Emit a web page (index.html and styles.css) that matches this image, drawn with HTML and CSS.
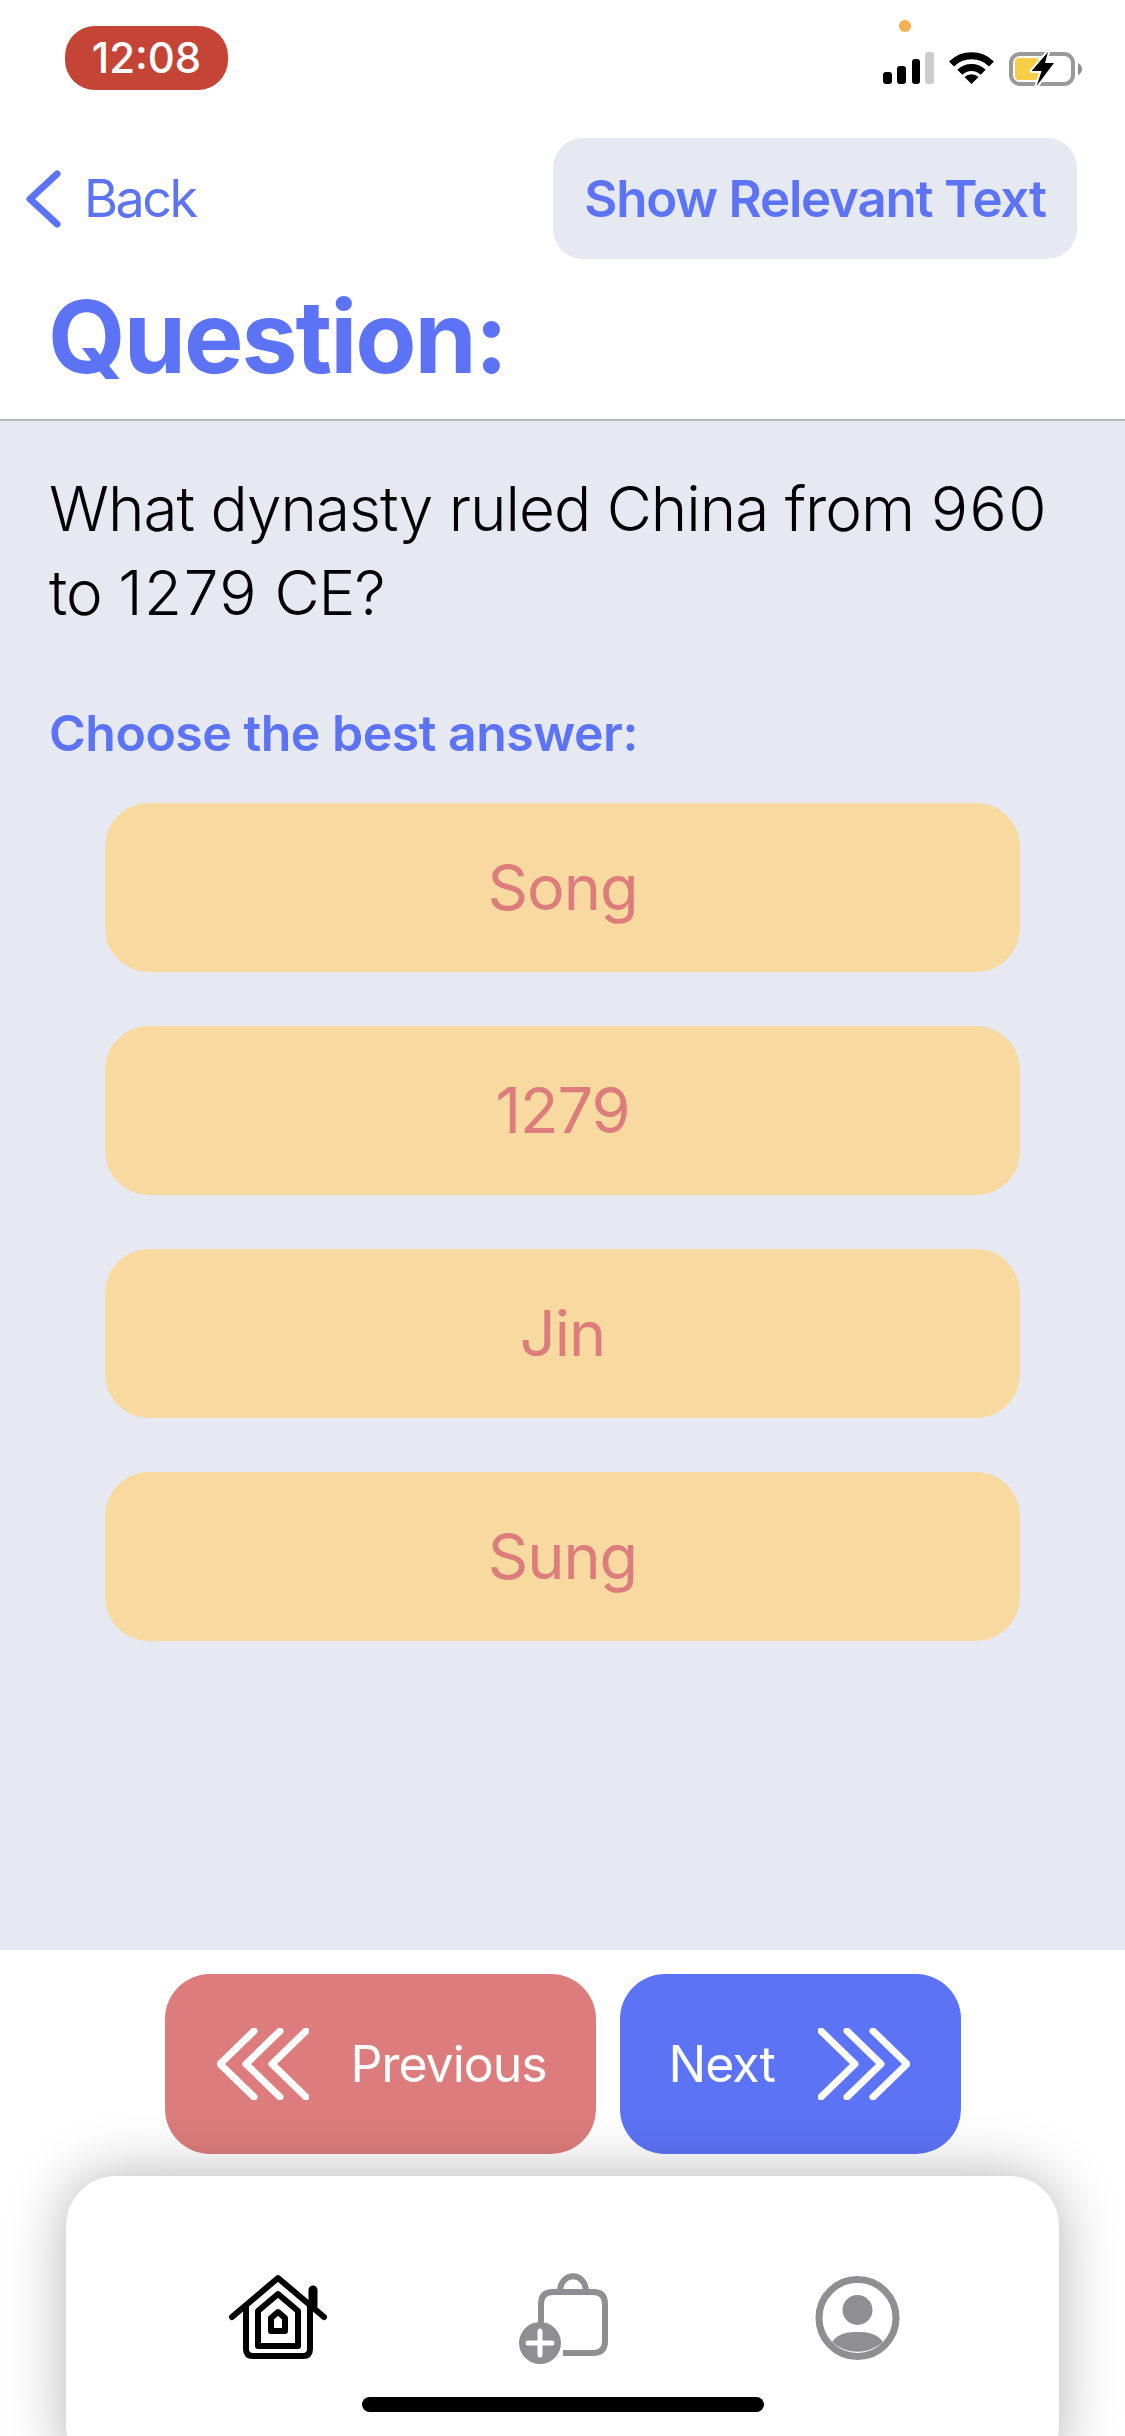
FILE: index.html
```html
<!DOCTYPE html>
<html lang="en">
<head>
    <meta charset="UTF-8">
    <meta name="viewport" content="width=device-width, initial-scale=1.0">
    <title>Question</title>
    <link rel="stylesheet" href="styles.css">
</head>
<body>

<div class="screen">
    <div class="status-bar">
        <div class="time">12:08</div>
        <div class="status-dot"></div>
        <div class="status-icons">
            <svg width="51" height="34" viewBox="0 0 51 34">
                <rect x="0" y="21" width="9" height="12" rx="3" fill="#000"/>
                <rect x="14" y="15" width="9" height="18" rx="3" fill="#000"/>
                <rect x="29" y="8" width="8" height="25" rx="3" fill="#000"/>
                <rect x="42" y="1" width="9" height="32" rx="3" fill="#ccc"/>
            </svg>
            <svg width="45" height="34" viewBox="0 0 45 34">
                <path d="M2.5 13A28.5 28.5 0 0 1 42.5 13" fill="none" stroke="#000" stroke-width="7"/>
                <path d="M10.8 21.3A16.5 16.5 0 0 1 34.2 21.3" fill="none" stroke="#000" stroke-width="7"/>
                <path d="M22.5 33L15.5 26A10 10 0 0 1 29.5 26Z" fill="#000"/>
            </svg>
            <svg width="73" height="37" viewBox="0 0 73 37">
                <rect x="2" y="3" width="62" height="30" rx="9" fill="none" stroke="#9a9a9a" stroke-width="4"/>
                <path d="M69 12Q73 14 73 18Q73 22 69 24Z" fill="#8e8e8e"/>
                <rect x="6" y="7" width="24" height="22" rx="4" fill="#f9ce46"/>
                <path d="M39 1L22.6 20H32.6L27.6 35L45 12H36Z" fill="#000" stroke="#fff" stroke-width="4" paint-order="stroke" stroke-linejoin="round"/>
            </svg>
        </div>
    </div>

    <div class="header">
        <div class="header-row">
            <div class="back">
                <svg width="40" height="60" viewBox="0 0 40 60">
                    <path d="M33 5L6 30L33 55" fill="none" stroke="#5c73f5" stroke-width="7" stroke-linecap="round" stroke-linejoin="round"/>
                </svg>
                <span>Back</span>
            </div>
            <button class="show-text">Show Relevant Text</button>
        </div>
        <h1>Question:</h1>
    </div>

    <div class="content">
        <p class="question">What dynasty ruled China from <span class="num">960</span> to <span class="num">1279</span> CE?</p>
        <p class="choose">Choose the best answer:</p>
        <div class="answers">
            <div class="answer">Song</div>
            <div class="answer">1279</div>
            <div class="answer">Jin</div>
            <div class="answer">Sung</div>
        </div>
    </div>

    <div class="footer">
        <div class="pager">
            <div class="page-btn prev">
                <svg width="92" height="72" viewBox="0 0 92 72">
                    <path d="M37 3L3 36L37 69M63 3L29 36L63 69M89 3L55 36L89 69" fill="none" stroke="#fff" stroke-width="7" stroke-linecap="round" stroke-linejoin="round"/>
                </svg>
                <span>Previous</span>
            </div>
            <div class="page-btn next">
                <span>Next</span>
                <svg width="92" height="72" viewBox="0 0 92 72">
                    <path d="M3 3L37 36L3 69M29 3L63 36L29 69M55 3L89 36L55 69" fill="none" stroke="#fff" stroke-width="7" stroke-linecap="round" stroke-linejoin="round"/>
                </svg>
            </div>
        </div>

        <div class="tab-bar">
            <svg width="105" height="100" viewBox="0 0 105 100">
                <path d="M7 49L53 10L99 49" fill="none" stroke="#000" stroke-width="6" stroke-linecap="round" stroke-linejoin="round"/>
                <path d="M88 38V22" fill="none" stroke="#000" stroke-width="9" stroke-linecap="round"/>
                <path d="M21 38V81Q21 88 28 88H78Q85 88 85 81V38" fill="none" stroke="#000" stroke-width="6"/>
                <path d="M33 43L53 26L73 43V78H33Z" fill="none" stroke="#000" stroke-width="6" stroke-linejoin="round"/>
                <path d="M46 50L53 44L60 50V63H46Z" fill="none" stroke="#000" stroke-width="6" stroke-linejoin="round"/>
            </svg>
            <svg width="105" height="100" viewBox="0 0 105 100">
                <path d="M26 55V36Q26 24 38 24H78Q90 24 90 36V73Q90 85 78 85H48" fill="none" stroke="#8e8e93" stroke-width="6"/>
                <path d="M45 24C45 3 71 3 71 24" fill="none" stroke="#8e8e93" stroke-width="6"/>
                <circle cx="25" cy="75" r="21" fill="#8e8e93"/>
                <path d="M13 75H37M25 63V87" stroke="#fff" stroke-width="5" stroke-linecap="round"/>
            </svg>
            <svg width="105" height="100" viewBox="0 0 105 100">
                <circle cx="52.5" cy="50" r="38.5" fill="none" stroke="#8e8e93" stroke-width="7"/>
                <circle cx="52.5" cy="42" r="15" fill="#8e8e93"/>
                <path d="M27 74C33 65 43 64 52.5 64C62 64 72 65 78 74A38 38 0 0 1 27 74Z" fill="#8e8e93"/>
            </svg>
            <div class="home-indicator"></div>
        </div>
    </div>
</div>

</body>
</html>
```
FILE: styles.css
```css
* {
    box-sizing: border-box;
}
body {
    margin: 0;
    font-family: Inter, "Liberation Sans", sans-serif;
    background-color: #ffffff;
    color: #000;
}
.screen {
    width: 1125px;
    height: 2436px;
    display: flex;
    flex-direction: column;
    overflow: hidden;
    position: relative;
}

/* status bar */
.status-bar {
    height: 138px;
    flex-shrink: 0;
    display: flex;
    justify-content: space-between;
    align-items: flex-start;
    padding: 26px 43px 0 65px;
}
.time {
    width: 163px;
    height: 64px;
    border-radius: 30px;
    background-color: #c44536;
    color: #fff;
    font-size: 42px;
    line-height: 64px;
    font-weight: 500;
    text-align: center;
}
.status-dot {
    position: absolute;
    left: 899px;
    top: 20px;
    width: 12px;
    height: 12px;
    border-radius: 50%;
    background-color: #f4b04f;
}
.status-icons {
    display: flex;
    align-items: flex-start;
    gap: 15px;
    margin-top: 25px;
}

/* header */
.header {
    height: 283px;
    flex-shrink: 0;
    border-bottom: 2px solid #b8b8bc;
}
.header-row {
    display: flex;
    justify-content: space-between;
    align-items: center;
    padding: 0 48px 0 24px;
}
.back {
    display: flex;
    align-items: center;
    gap: 20px;
    color: #5c73f5;
    font-size: 52px;
    letter-spacing: -2.5px;
}
.show-text {
    width: 524px;
    height: 121px;
    border: none;
    border-radius: 30px;
    background-color: #e6e9f2;
    color: #5c73f5;
    font-family: inherit;
    font-size: 51px;
    font-weight: 600;
    letter-spacing: -1.2px;
}
h1 {
    margin: 23px 0 0 48px;
    color: #5c73f5;
    font-size: 100px;
    line-height: 110px;
    font-weight: 700;
    letter-spacing: -2px;
}

/* question */
.content {
    flex: 1;
    background-color: #e6e9f2;
    padding: 46px 49px 0;
}
.question {
    margin: 0;
    font-size: 62px;
    line-height: 84px;
    font-weight: 300;
    letter-spacing: -1px;
}
.num {
    letter-spacing: 1.5px;
}
.choose {
    margin: 68px 0 0;
    color: #5c73f5;
    font-size: 50px;
    line-height: 60px;
    font-weight: 600;
    letter-spacing: -0.5px;
}
.answers {
    display: flex;
    flex-direction: column;
    gap: 54px;
    margin: 40px 56px 0;
}
.answer {
    height: 169px;
    border-radius: 44px;
    background-color: #f8d9a0;
    color: #dc7c7c;
    font-size: 63px;
    line-height: 169px;
    letter-spacing: -1px;
    text-align: center;
}

/* bottom */
.footer {
    height: 486px;
    flex-shrink: 0;
    padding-top: 24px;
}
.pager {
    display: flex;
    justify-content: center;
    gap: 24px;
}
.page-btn {
    height: 180px;
    border-radius: 45px;
    display: flex;
    align-items: center;
    color: #fff;
    font-size: 50px;
    letter-spacing: -1px;
}
.prev {
    width: 431px;
    padding-left: 52px;
    gap: 42px;
    background-color: #dc7c7c;
}
.next {
    width: 341px;
    padding-left: 49px;
    gap: 43px;
    background-color: #5c73f5;
}
.tab-bar {
    position: relative;
    height: 300px;
    margin: 22px 66px 0;
    padding: 92px 0 0 159px;
    display: flex;
    gap: 185px;
    align-items: flex-start;
    background-color: #fff;
    border-radius: 50px;
    box-shadow: 0 0 60px rgba(0, 0, 0, 0.3);
}
.home-indicator {
    position: absolute;
    left: 296px;
    top: 221px;
    width: 402px;
    height: 15px;
    border-radius: 8px;
    background-color: #000;
}
```
